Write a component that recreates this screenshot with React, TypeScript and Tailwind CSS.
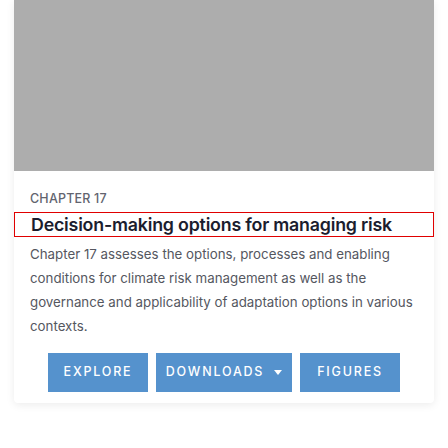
export default function App() {
  return (
    <div className="w-[448px] h-[448px] bg-white pt-0" style={{ fontFamily: "Inter, 'Liberation Sans', sans-serif" }}>
      <div className="mx-[14px] bg-white rounded-b shadow-[0_2px_8px_rgba(0,0,0,0.08)] pb-[11px]">
        <div className="h-[171px] bg-[#adadad]" />
        <div className="px-4 pt-[21px]">
          <div className="text-[12.5px] leading-[14px] font-medium text-[#62646f] tracking-[0.2px]">CHAPTER 17</div>
        </div>
        <h3 className="mt-[6px] border border-[#e00000] h-[25px] px-4 text-[17.8px] leading-[23px] font-semibold text-[#1b1d2e] tracking-[-0.2px]">
          Decision-making options for managing risk
        </h3>
        <p className="px-4 pt-[5px] text-[13.3px] leading-[24px] text-[#55575f]">
          Chapter 17 assesses the options, processes and enabling conditions for climate risk management as well as the governance and applicability of adaptation options in various contexts.
        </p>
        <div className="flex justify-center gap-2 mt-[15px]">
          <button className="w-[100px] h-[39px] bg-[#5592cd] text-white text-[12.5px] font-medium tracking-[1.8px]">EXPLORE</button>
          <button className="w-[136px] h-[39px] bg-[#5592cd] text-white text-[12.5px] font-medium tracking-[1.8px] flex items-center justify-center gap-[10px]">
            DOWNLOADS
            <svg width="8" height="5" viewBox="0 0 8 5"><path d="M0 0h8L4 5z" fill="white" /></svg>
          </button>
          <button className="w-[100px] h-[39px] bg-[#5592cd] text-white text-[12.5px] font-medium tracking-[1.8px]">FIGURES</button>
        </div>
      </div>
    </div>
  );
}
